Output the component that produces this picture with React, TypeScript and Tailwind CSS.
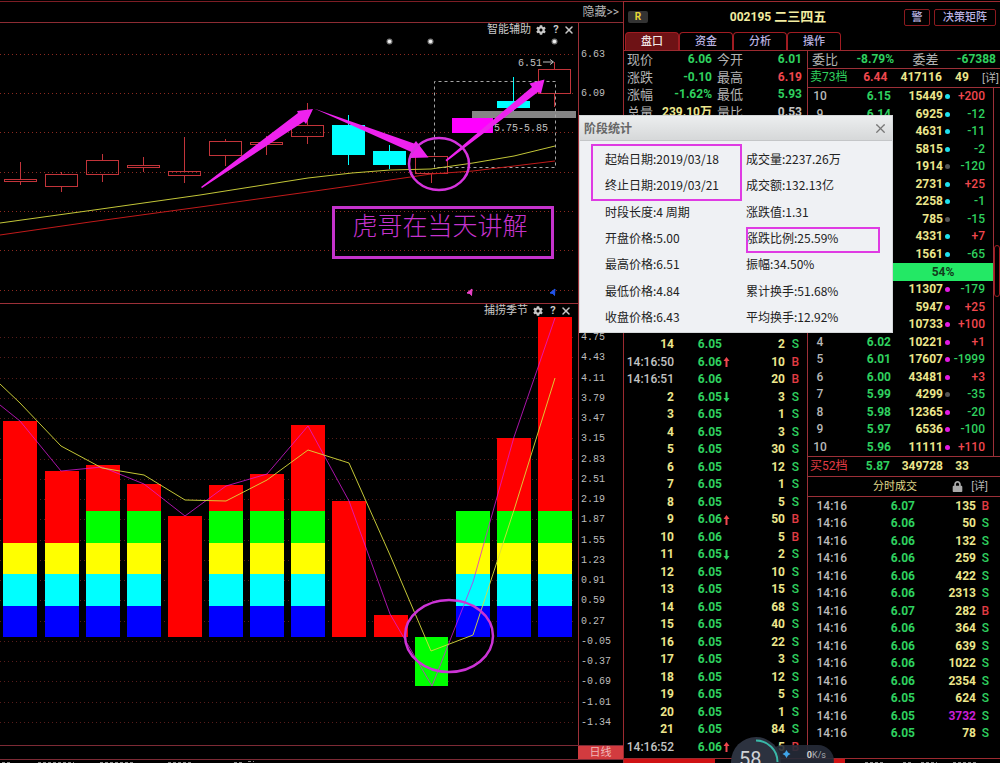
import React, { FC, useState } from "react";
import clsx from "clsx";
import { X } from "lucide-react";
import { FaCog, FaLock } from "react-icons/fa";

type Tone = "up" | "down" | "flat" | "plain" | "special";

const toneClass: Record<Tone, string> = {
  up: "text-[#f0474e]",
  down: "text-[#2fd05f]",
  flat: "text-[#ece68c]",
  plain: "text-[#c4c4c4]",
  special: "text-[#c91fd6]",
};

interface Candle {
  x: number;
  top: number;
  bottom: number;
  high: number;
  low: number;
  kind: "hollow" | "cyan" | "magenta";
}

const candles: Candle[] = [
  { x: 4, top: 156, bottom: 158, high: 139, low: 162, kind: "hollow" },
  { x: 45, top: 151, bottom: 163, high: 149, low: 169, kind: "hollow" },
  { x: 86, top: 137, bottom: 151, high: 131, low: 159, kind: "hollow" },
  { x: 127, top: 142, bottom: 144, high: 134, low: 149, kind: "hollow" },
  { x: 168, top: 148, bottom: 152, high: 114, low: 160, kind: "hollow" },
  { x: 209, top: 118, bottom: 132, high: 116, low: 143, kind: "hollow" },
  { x: 250, top: 119, bottom: 121, high: 113, low: 132, kind: "hollow" },
  { x: 291, top: 102, bottom: 113, high: 80, low: 121, kind: "hollow" },
  { x: 332, top: 102, bottom: 131, high: 92, low: 142, kind: "cyan" },
  { x: 373, top: 128, bottom: 141, high: 122, low: 146, kind: "cyan" },
  { x: 415, top: 133, bottom: 150, high: 133, low: 160, kind: "hollow" },
  { x: 497, top: 78, bottom: 84, high: 54, low: 89, kind: "cyan" },
  { x: 538, top: 46, bottom: 70, high: 39, low: 84, kind: "hollow" },
];

interface SeasonBar {
  x: number;
  top: number;
  levels: number;
}

// levels: how many of the blue / cyan / yellow / green layers are filled
const bars: SeasonBar[] = [
  { x: 3, top: 117, levels: 3 },
  { x: 45, top: 167, levels: 3 },
  { x: 86, top: 161, levels: 4 },
  { x: 127, top: 180, levels: 4 },
  { x: 168, top: 212, levels: 0 },
  { x: 209, top: 181, levels: 4 },
  { x: 250, top: 170, levels: 4 },
  { x: 291, top: 121, levels: 4 },
  { x: 332, top: 197, levels: 0 },
  { x: 374, top: 311, levels: 0 },
  { x: 456, top: 207, levels: 4 },
  { x: 497, top: 134, levels: 4 },
  { x: 538, top: 13, levels: 4 },
];

const layers = [
  { y: 302, h: 31, fill: "#0000ff" },
  { y: 270, h: 32, fill: "#00ffff" },
  { y: 239, h: 31, fill: "#ffff00" },
  { y: 207, h: 32, fill: "#00ff00" },
];

const seasonAxis = [
  "4.75", "4.43", "4.11", "3.79", "3.47", "3.15", "2.83", "2.51", "2.19", "1.87",
  "1.55", "1.23", "0.91", "0.59", "0.27", "-0.05", "-0.37", "-0.69", "-1.01", "-1.34",
];

interface Tick {
  time: string;
  price: string;
  arrow?: "up" | "down";
  qty: string;
  side: "B" | "S";
}

const ticks: Tick[] = [
  { time: "14", price: "6.05", qty: "2", side: "S" },
  { time: "14:16:50", price: "6.06", arrow: "up", qty: "10", side: "B" },
  { time: "14:16:51", price: "6.06", qty: "20", side: "B" },
  { time: "2", price: "6.05", arrow: "down", qty: "3", side: "S" },
  { time: "3", price: "6.05", qty: "1", side: "S" },
  { time: "4", price: "6.05", qty: "3", side: "S" },
  { time: "5", price: "6.05", qty: "30", side: "S" },
  { time: "6", price: "6.05", qty: "12", side: "S" },
  { time: "7", price: "6.05", qty: "1", side: "S" },
  { time: "8", price: "6.05", qty: "5", side: "S" },
  { time: "9", price: "6.06", arrow: "up", qty: "50", side: "B" },
  { time: "10", price: "6.06", qty: "5", side: "B" },
  { time: "11", price: "6.05", arrow: "down", qty: "2", side: "S" },
  { time: "12", price: "6.05", qty: "10", side: "S" },
  { time: "13", price: "6.05", qty: "15", side: "S" },
  { time: "14", price: "6.05", qty: "68", side: "S" },
  { time: "15", price: "6.05", qty: "40", side: "S" },
  { time: "16", price: "6.05", qty: "22", side: "S" },
  { time: "17", price: "6.05", qty: "3", side: "S" },
  { time: "18", price: "6.05", qty: "12", side: "S" },
  { time: "19", price: "6.05", qty: "5", side: "S" },
  { time: "20", price: "6.05", qty: "1", side: "S" },
  { time: "21", price: "6.05", qty: "84", side: "S" },
  { time: "14:16:52", price: "6.06", arrow: "up", qty: "5", side: "B" },
];

interface BookRow {
  level?: string;
  price?: string;
  qty: string;
  dot: "cyan" | "gray" | "magenta";
  delta: string;
}

const sells: BookRow[] = [
  { level: "10", price: "6.15", qty: "15449", dot: "cyan", delta: "+200" },
  { level: "9", price: "6.14", qty: "6925", dot: "cyan", delta: "-12" },
  { qty: "4631", dot: "cyan", delta: "-11" },
  { qty: "5815", dot: "cyan", delta: "-2" },
  { qty: "1914", dot: "gray", delta: "-120" },
  { qty: "2731", dot: "cyan", delta: "+25" },
  { qty: "2258", dot: "cyan", delta: "-1" },
  { qty: "785", dot: "gray", delta: "-15" },
  { qty: "4331", dot: "cyan", delta: "+7" },
  { qty: "1561", dot: "cyan", delta: "-65" },
];

const buys: BookRow[] = [
  { qty: "11307", dot: "magenta", delta: "-179" },
  { qty: "5947", dot: "magenta", delta: "+25" },
  { qty: "10733", dot: "magenta", delta: "+100" },
  { level: "4", price: "6.02", qty: "10221", dot: "magenta", delta: "+1" },
  { level: "5", price: "6.01", qty: "17607", dot: "magenta", delta: "-1999" },
  { level: "6", price: "6.00", qty: "43481", dot: "magenta", delta: "+3" },
  { level: "7", price: "5.99", qty: "4299", dot: "gray", delta: "-35" },
  { level: "8", price: "5.98", qty: "12365", dot: "magenta", delta: "-20" },
  { level: "9", price: "5.97", qty: "6536", dot: "magenta", delta: "-100" },
  { level: "10", price: "5.96", qty: "11111", dot: "magenta", delta: "+110" },
];

const deals: { price: string; qty: string; side: "B" | "S"; large?: boolean }[] = [
  { price: "6.07", qty: "135", side: "B" },
  { price: "6.06", qty: "50", side: "S" },
  { price: "6.06", qty: "132", side: "S" },
  { price: "6.06", qty: "259", side: "S" },
  { price: "6.06", qty: "422", side: "S" },
  { price: "6.06", qty: "2313", side: "S" },
  { price: "6.07", qty: "282", side: "B" },
  { price: "6.06", qty: "364", side: "S" },
  { price: "6.06", qty: "639", side: "S" },
  { price: "6.06", qty: "1022", side: "S" },
  { price: "6.06", qty: "2354", side: "S" },
  { price: "6.05", qty: "624", side: "S" },
  { price: "6.05", qty: "3732", side: "S", large: true },
  { price: "6.05", qty: "78", side: "S" },
];

const quotes: { label: string; value: string; tone: Tone }[][] = [
  [{ label: "现价", value: "6.06", tone: "down" }, { label: "今开", value: "6.01", tone: "down" }],
  [{ label: "涨跌", value: "-0.10", tone: "down" }, { label: "最高", value: "6.19", tone: "up" }],
  [{ label: "涨幅", value: "-1.62%", tone: "down" }, { label: "最低", value: "5.93", tone: "down" }],
  [{ label: "总量", value: "239.10万", tone: "flat" }, { label: "量比", value: "0.53", tone: "plain" }],
];

const stats = [
  ["起始日期:2019/03/18", "成交量:2237.26万"],
  ["终止日期:2019/03/21", "成交额:132.13亿"],
  ["时段长度:4 周期", "涨跌值:1.31"],
  ["开盘价格:5.00", "涨跌比例:25.59%"],
  ["最高价格:6.51", "振幅:34.50%"],
  ["最低价格:4.84", "累计换手:51.68%"],
  ["收盘价格:6.43", "平均换手:12.92%"],
];

const ChartTools: FC<{ title: string; className?: string }> = ({ title, className }) => (
  <div className={clsx("absolute top-0 flex h-3.5 items-center text-[11px] leading-3.5 text-[#c8c8c8]", className)}>
    <span className="mr-1">{title}</span>
    <button type="button" aria-label="设置" className="mr-1 px-px">
      <FaCog size={10} />
    </button>
    <button type="button" className="w-2.5 font-bold">?</button>
    <button type="button" aria-label="关闭" className="ml-0.5">
      <X size={12} strokeWidth={3} />
    </button>
  </div>
);

const GridLine: FC<{ y: number; color: string }> = ({ y, color }) => (
  <line x1="0" y1={y} x2="576" y2={y} stroke={color} strokeWidth="1" strokeDasharray="1 3" />
);

const PriceChart: FC = () => (
  <svg viewBox="0 0 578 280" className="block h-auto w-full" aria-label="K线图">
    {[31.5, 70.5, 109.5, 149.5, 188.5, 227.5, 267.5].map(y => (
      <GridLine key={y} y={y} color="#8c2a20" />
    ))}
    {candles.map(c => {
      const mid = c.x + 16.5;
      const color = c.kind === "hollow" ? "#c2343a" : "#00ffff";
      return (
        <g key={c.x} stroke={color} strokeWidth="1">
          <line x1={mid} y1={c.high} x2={mid} y2={c.top} />
          <line x1={mid} y1={c.bottom} x2={mid} y2={c.low} />
          <rect
            x={c.x + 0.5}
            y={c.top + 0.5}
            width="32"
            height={c.bottom - c.top}
            fill={c.kind === "hollow" ? "none" : color}
          />
        </g>
      );
    })}
    <rect x="472" y="88" width="104" height="7" fill="#858585" />
    <rect x="452" y="95" width="41" height="15" fill="#ff00ff" />
    <path d="M434.5 144.500V58.500H555.500V144.500Z" fill="none" stroke="#a5a5a5" strokeDasharray="3 3" />
    <polyline
      points="0,200 94,187 200,172 308,155 352,150 390,147 431,146 473,140 514,133 555,123"
      fill="none"
      stroke="#c3c638"
    />
    <polyline
      points="0,212 90,199 200,184 308,169 350,163 390,157 431,151 473,148 555,138"
      fill="none"
      stroke="#c01a1a"
    />
    {[389.5, 430.5, 554.5].map(x => (
      <g key={x}>
        <circle cx={x} cy="18.500" r="3" fill="#777" />
        <circle cx={x} cy="18.500" r="1.800" fill="#eee" />
      </g>
    ))}
    <g fontFamily="Liberation Mono, monospace" fontSize="10" fill="#c0c0c0">
      <text x="518" y="43">6.51</text>
      <text x="494" y="108">5.75-5.85</text>
    </g>
    <path d="M543 39H553M550 36.500L553.500 39L550 41.500" fill="none" stroke="#c0c0c0" />
    <g fill="#ee22ee">
      <path d="M201 164L298 90L297 88L313 86L306 101L304 98.500L202 165Z" />
      <path d="M314 85.500L414 120.500L416 118L428.500 134.500L410 135L412.500 129.500Z" />
      <path d="M445.500 137L532 64L529.500 60.500L544.500 56.500L541 70.500L538 69L446.500 138.500Z" />
    </g>
    <ellipse cx="439" cy="141" rx="30" ry="26" fill="none" stroke="#d633dd" strokeWidth="2.500" />
    <path d="M467 270L472 266L471.500 272.500L470 270.500Z" fill="#ee44cc" stroke="#ee44cc" />
    <path d="M550 270L555 266L554.500 272.500L553 270.500Z" fill="#2255ee" stroke="#2255ee" />
  </svg>
);

const SeasonChart: FC = () => (
  <svg viewBox="0 0 578 441" className="block h-auto w-full" aria-label="捕捞季节">
    {seasonAxis.map((label, i) => (
      <GridLine key={label} y={Math.round(33 + i * 20.25) + 0.5} color="#571c1a" />
    ))}
    {bars.map(bar => (
      <g key={bar.x}>
        <rect x={bar.x} y={bar.top} width="34" height={333 - bar.top} fill="#ff0000" />
        {layers.slice(0, bar.levels).map(l => (
          <rect key={l.y} x={bar.x} y={l.y} width="34" height={l.h} fill={l.fill} />
        ))}
      </g>
    ))}
    <rect x="415" y="333" width="33" height="49" fill="#00ff00" />
    <polyline
      points="0,101 20,117 61,167 102,163 144,180 185,212 226,182 267,170 308,122 349,197 390,310 432,382 473,278 514,133 555,14"
      fill="none"
      stroke="#e01ae0"
      strokeOpacity="0.750"
    />
    <polyline
      points="0,80 20,99 61,142 102,164 144,171 185,196 226,197 267,176 308,146 349,159 390,251 431,347 473,331 514,206 555,74"
      fill="none"
      stroke="#d8dc3c"
      strokeOpacity="0.900"
    />
    <ellipse cx="449" cy="332" rx="44" ry="36" fill="none" stroke="#cc33d6" strokeWidth="2.500" />
  </svg>
);

const Side: FC<{ side: "B" | "S" }> = ({ side }) => (
  <td className={clsx("text-right font-medium", side === "B" ? "text-[#e23c44]" : "text-[#2fd05f]")}>{side}</td>
);

const QuoteTable: FC = () => (
  <table className="w-full table-fixed text-right">
    <colgroup>
      <col className="w-[31px]" />
      <col className="w-[57px]" />
      <col className="w-[32px]" />
      <col />
    </colgroup>
    <tbody>
      {quotes.map((row, i) => (
        <tr key={i} className="odd:h-[17px] even:h-[18px]">
          {row.map((q, j) => (
            <React.Fragment key={q.label}>
              <th scope="row" className={clsx("text-left text-[13px] font-normal text-[#b4b4b4]", j === 0 ? "pl-[3px]" : "pl-[5px]")}>
                {q.label}
              </th>
              <td className={clsx(toneClass[q.tone], j === 1 && "pr-[5px]")}>{q.value}</td>
            </React.Fragment>
          ))}
        </tr>
      ))}
    </tbody>
  </table>
);

const TickTable: FC = () => (
  <table className="w-full table-fixed text-right">
    <colgroup>
      <col className="w-[50px]" />
      <col className="w-[48px]" />
      <col className="w-[10px]" />
      <col className="w-[53px]" />
      <col className="w-[14px]" />
      <col />
    </colgroup>
    <tbody>
      {ticks.map((t, i) => (
        <tr key={i} className="odd:h-[17px] even:h-[18px]">
          <td className={t.time.includes(":") ? "font-medium text-[#c4c4c4]" : toneClass.flat}>{t.time}</td>
          <td className={toneClass.down}>{t.price}</td>
          <td>
            {t.arrow && (
              <svg viewBox="0 0 7 10" className={clsx("ml-px h-2.5 w-[7px]", toneClass[t.arrow], t.arrow === "down" && "rotate-180")}>
                <path d="M3.500 0L6.500 4H4.500V10H2.500V4H0.500Z" fill="currentColor" />
              </svg>
            )}
          </td>
          <td className={toneClass.flat}>{t.qty}</td>
          <Side side={t.side} />
          <td />
        </tr>
      ))}
    </tbody>
  </table>
);

const dotClass = {
  cyan: "bg-[#1fe0ee]",
  gray: "bg-[#555555]",
  magenta: "bg-[#e41ae4]",
};

const BookTable: FC<{ rows: BookRow[] }> = ({ rows }) => (
  <table className="w-full table-fixed text-right">
    <colgroup>
      <col className="w-[24px]" />
      <col className="w-[59px]" />
      <col className="w-[52px]" />
      <col className="w-[9px]" />
      <col />
    </colgroup>
    <tbody>
      {rows.map((r, i) => (
        <tr key={i} className="odd:h-[17px] even:h-[18px]">
          <td className="text-center font-medium text-[#b8b8b8]">{r.level}</td>
          <td className={toneClass.down}>{r.price}</td>
          <td className={toneClass.flat}>{r.qty}</td>
          <td>
            <span className={clsx("ml-0.5 block size-[5px] rounded-full", dotClass[r.dot])} />
          </td>
          <td className={clsx("pr-2 font-medium", r.delta.startsWith("+") ? toneClass.up : toneClass.down)}>{r.delta}</td>
        </tr>
      ))}
    </tbody>
  </table>
);

const DealTable: FC = () => (
  <table className="w-full table-fixed text-right">
    <colgroup>
      <col className="w-[39px]" />
      <col className="w-[68px]" />
      <col className="w-[61px]" />
      <col className="w-[13px]" />
      <col />
    </colgroup>
    <tbody>
      {deals.map((d, i) => (
        <tr key={i} className="odd:h-[18px] even:h-[17px]">
          <td className="font-medium text-[#bcbcbc]">14:16</td>
          <td className={toneClass.down}>{d.price}</td>
          <td className={d.large ? toneClass.special : toneClass.flat}>{d.qty}</td>
          <Side side={d.side} />
          <td />
        </tr>
      ))}
    </tbody>
  </table>
);

const StatsDialog: FC<{ onClose: () => void }> = ({ onClose }) => (
  <div
    role="dialog"
    aria-label="阶段统计"
    className="absolute top-[115px] right-[107px] w-[314px] border border-[#d5d8da] bg-[#eff1f4] pb-0.5 font-['Noto_Sans_CJK_SC',sans-serif] text-xs text-[#222]"
  >
    <div className="flex h-[25px] items-center justify-between border-b border-[#c4c6c8] bg-linear-to-b from-[#eceeef] to-[#d6d8d9] px-1">
      <h2 className="font-bold text-[#666]">阶段统计</h2>
      <button type="button" aria-label="关闭" onClick={onClose} className="text-[#777]">
        <X size={15} />
      </button>
    </div>
    <div className="grid h-[189px] grid-cols-[141px_1fr] grid-rows-7 items-center pt-[5px] pl-[25px]">
      {stats.flat().map(item => (
        <p key={item}>{item}</p>
      ))}
    </div>
    <div className="absolute top-7 left-[11px] h-[57px] w-[151px] border-2 border-[#df3be3]" />
    <div className="absolute top-[111px] left-[166px] h-[26px] w-[134px] border-2 border-[#df3be3]" />
  </div>
);

const SpeedBall: FC = () => (
  <div className="absolute bottom-0 left-[731px] h-[26px] w-[103px] overflow-hidden">
    <div className="absolute top-2 left-9 flex h-8 w-[67px] items-start justify-end rounded-2xl bg-[#262b38]/90 pt-0.5 pr-2 text-[9px] leading-4 text-[#a5a8ae]">
      <span className="font-bold text-[#d0d0d0]">0</span>
      <span>K/s</span>
    </div>
    <svg viewBox="0 0 103 50" className="absolute top-0 left-0 h-[50px] w-[103px]">
      <circle cx="25" cy="25" r="25" fill="#2c323f" />
      <path d="M25 3.500A21.500 21.500 0 0 1 46.500 25" fill="none" stroke="#39b8a8" strokeWidth="2" />
      <path d="M55.500 13L57 15.500L59.500 17L57 18.500L55.500 21L54 18.500L51.500 17L54 15.500Z" fill="#3fa4e8" />
    </svg>
    <div className="absolute top-2.5 left-2 text-xl leading-6 text-[#cfd2d6]">58</div>
  </div>
);

const tabs = ["盘口", "资金", "分析", "操作"];

const App: FC = () => {
  const [activeTab, setActiveTab] = useState("盘口");
  const [showStats, setShowStats] = useState(true);

  return (
    <div className="relative flex min-h-screen overflow-hidden bg-black pt-px font-[Roboto,'Noto_Sans_CJK_SC',sans-serif] whitespace-nowrap">
      <main className="flex min-w-0 flex-1 flex-col border-t border-[#7c1d24]">
        <div className="flex h-[21px] items-center justify-end border-b border-[#8c2c33] pr-1 text-xs text-[#b4b4b4]">
          <button type="button">隐藏&gt;&gt;</button>
        </div>

        <section className="flex">
          <div className="relative min-w-0 flex-1">
            <PriceChart />
            <ChartTools title="智能辅助" className="right-[3px]" />
            <div className="absolute top-[183px] right-6 flex h-[53px] w-[222px] justify-center border-3 border-[#c433cc] text-[25px] leading-9 font-light text-[#c433cc]">
              <span className="-ml-1.5">虎哥在当天讲解</span>
            </div>
          </div>
          <div className="w-[45px] border-l border-[#9c3038] pt-3 pl-0.5 font-['Liberation_Mono',monospace] text-[10px] text-[#bdbdbd]">
            <div className="h-[39px] leading-[39px]">6.63</div>
            <div className="h-[39px] leading-[39px]">6.09</div>
          </div>
        </section>

        <section className="flex border-t border-[#9c3038]">
          <div className="relative min-w-0 flex-1">
            <SeasonChart />
            <ChartTools title="捕捞季节" className="right-1.5" />
          </div>
          <div className="flex w-[45px] flex-col justify-between border-l border-[#9c3038] pt-7 pb-4 pl-0.5 font-['Liberation_Mono',monospace] text-[10px] leading-3 text-[#bdbdbd]">
            {seasonAxis.map(label => (
              <span key={label}>{label}</span>
            ))}
          </div>
        </section>

        <div className="flex h-[15px] justify-end border-y border-[#7c2a35]">
          <button type="button" className="w-[45px] bg-[#d23b3f] text-[11px] leading-3 text-[#f0b8b8]">日线</button>
        </div>
        {/* top edge of the news ticker */}
        <svg viewBox="0 0 623 3" className="block h-[3px] w-full">
          <path
            d="M2 2.500H12M38 2.500H74M100 2.500H134M168 2.500H192M234 2.500H244M248 1.500H254"
            fill="none"
            stroke="#8a8a8a"
            strokeDasharray="3 2"
          />
        </svg>
      </main>

      <aside className="flex w-[377px] shrink-0 flex-col border-t border-l border-[#9c2a30] text-xs leading-[17px] font-bold">
        <div className="flex h-[30px] items-center pr-1 pl-1">
          <span className="w-5 rounded-xs bg-[#333] text-center text-[10px] leading-3 text-[#e6d837]">R</span>
          <h1 className="flex-1 pl-1 text-center text-[#f2eca0]">
            002195 <span className="text-[13px]">二三四五</span>
          </h1>
          <button type="button" className="h-[17px] w-[26px] rounded-xs border border-[#8c1a1f] text-[11px] leading-[15px] font-medium text-[#b9b2e0]">警</button>
          <button type="button" className="ml-1 h-[17px] w-[62px] rounded-xs border border-[#8c1a1f] text-[11px] leading-[15px] font-medium text-[#b9b2e0]">决策矩阵</button>
        </div>
        <div className="flex h-[19px] border-b border-[#9c2a30] pl-px">
          {tabs.map(tab => (
            <button
              key={tab}
              type="button"
              onClick={() => setActiveTab(tab)}
              className={clsx(
                "w-[54px] rounded-t-sm border border-b-0 border-[#a01c22] text-[11px] leading-[17px] font-medium",
                tab === activeTab ? "bg-[#6e1215] text-[#f0e6e6]" : "text-[#b9b2e0]"
              )}
            >
              {tab}
            </button>
          ))}
        </div>

        <div className="flex flex-1 border-b border-[#9c2a30]">
          <div className="flex w-[183px] flex-col justify-between pb-0.5">
            <QuoteTable />
            <TickTable />
          </div>

          <div className="min-w-0 flex-1 border-l border-[#9c3038]">
            <div className="flex h-[18px] justify-between border-b border-[#9c3038] px-1">
              <span className="text-[13px] font-normal text-[#b4b4b4]">委比</span>
              <span className={toneClass.down}>-8.79%</span>
              <span className="text-[13px] font-normal text-[#b4b4b4]">委差</span>
              <span className={toneClass.down}>-67388</span>
            </div>
            <div className="flex h-[19px] justify-between border-b border-[#9c3038] pr-px pl-0.5">
              <span className="w-10 font-normal text-[#2fd05f]">卖73档</span>
              <span className={toneClass.up}>6.44</span>
              <span className={toneClass.flat}>417116</span>
              <span className={toneClass.flat}>49</span>
              <button type="button" className="text-[11px] font-normal text-[#b4b4b4]">[详]</button>
            </div>
            <div className="relative mr-[6px] border-r border-[#9c3038]">
              <BookTable rows={sells} />
              <div className="h-[18px] bg-[#23e865] pl-[85px] text-center leading-[18px] text-[#123c1c]">54%</div>
              <BookTable rows={buys} />
              <div className="absolute top-[157px] -right-[7px] h-[52px] w-[6px] rounded-sm border border-[#a01c22]" />
            </div>
            <div className="flex h-[21px] items-center border-y border-[#9c3038] pl-0.5">
              <span className="w-10 font-normal text-[#e23c44]">买52档</span>
              <span className={clsx("w-10 text-right", toneClass.down)}>5.87</span>
              <span className={clsx("w-[53px] text-right", toneClass.flat)}>349728</span>
              <span className={clsx("w-[26px] text-right", toneClass.flat)}>33</span>
            </div>
            <div className="flex h-5 items-center border-b border-[#9c3038] pr-3 pl-[65px] font-normal">
              <span className="flex-1 text-[11px] text-[#e0d98a]">分时成交</span>
              <FaLock size={11} className="mr-2 text-[#aaa]" />
              <button type="button" className="text-[11px] text-[#b4b4b4]">[详]</button>
            </div>
            <DealTable />
          </div>
        </div>
        <div className="flex h-1">
          <div className="w-[91px] bg-[#cf1214]" />
          <div className="ml-[118px] w-3 bg-[#cf1214]" />
          <svg viewBox="0 0 155 4" className="h-1 w-[155px]">
            <path d="M20 3.500H40M58 3.500H66M76 3.500H92M108 3.500H132" fill="none" stroke="#8a8a8a" strokeDasharray="3 2" />
          </svg>
        </div>
      </aside>

      {showStats && <StatsDialog onClose={() => setShowStats(false)} />}
      <SpeedBall />
    </div>
  );
};

export default App;
